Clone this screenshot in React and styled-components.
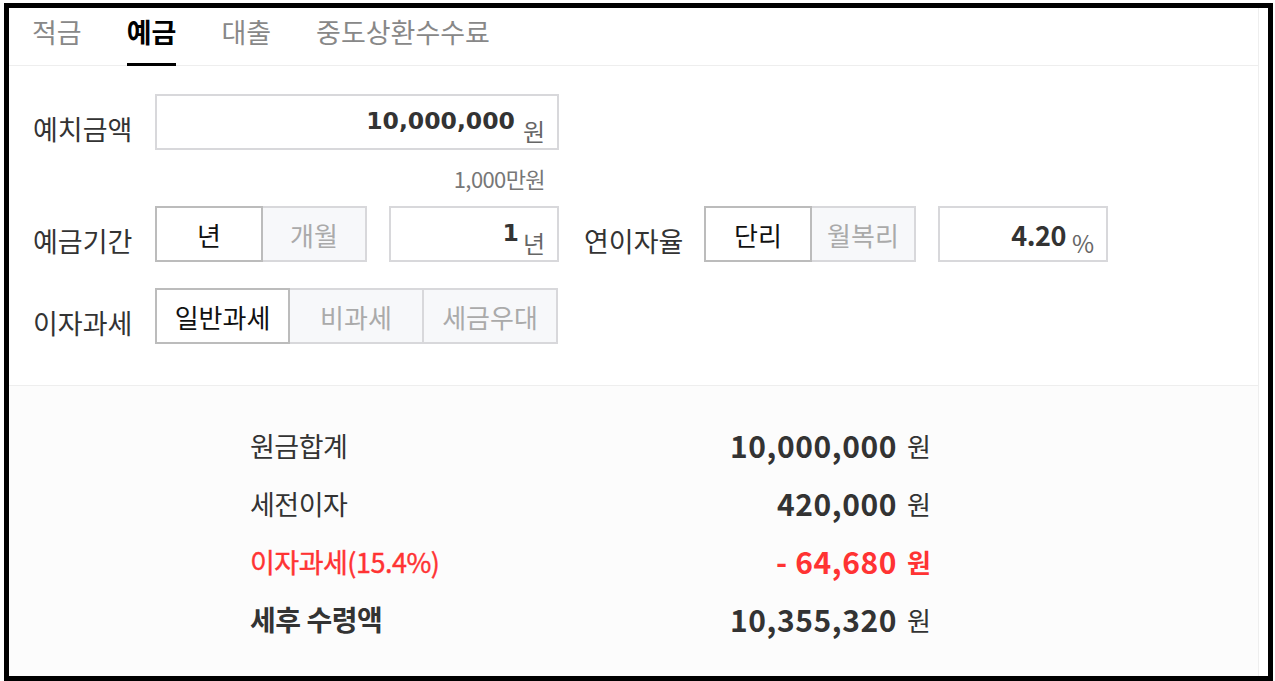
import React from "react";
import styled, { createGlobalStyle, css } from "styled-components";

const Global = createGlobalStyle`
  html, body { margin: 0; padding: 0; background: #fff; }
  body { font-family: "Noto Sans CJK KR", "Noto Sans", sans-serif; color: #333; }
  * { box-sizing: border-box; }
`;

const Frame = styled.div`
  margin: 3px 0 0 4px;
  width: 1269px;
  height: 678px;
  border: 5px solid #000;
  display: flex;
  overflow: hidden;
  background: #fff;
`;

const Panel = styled.div`
  width: 1250px;
  border-right: 1px solid #eeeeee;
  display: flex;
  flex-direction: column;
`;

const TabBar = styled.div`
  height: 58px;
  display: flex;
  gap: 45px;
  padding-left: 23px;
  border-bottom: 1px solid #eeeeee;
`;

const Tab = styled.div`
  height: 58px;
  margin-bottom: -1px;
  padding-bottom: 12px;
  display: flex;
  align-items: center;
  font-size: 27px;
  color: #888;
  ${(p) =>
    p.$active &&
    css`
      color: #000;
      font-weight: 700;
      border-bottom: 3px solid #000;
      padding-bottom: 9px;
    `}
`;

const Form = styled.div`
  padding: 28px 0 41px 24px;
  display: flex;
  flex-direction: column;
`;

const Row = styled.div`
  display: flex;
  align-items: stretch;
  height: 56px;
  margin-top: ${(p) => p.$mt || 0}px;
`;

const Label = styled.div`
  width: ${(p) => p.$w || 122}px;
  margin-left: ${(p) => p.$ml || 0}px;
  flex: none;
  font-size: 27px;
  color: #333;
  display: flex;
  align-items: center;
  padding-top: 12px;
`;

const Segmented = styled.div`
  display: flex;
  margin-right: 22px;
`;

const SegButton = styled.div`
  position: relative;
  width: ${(p) => p.$w}px;
  height: 56px;
  margin-left: -2px;
  &:first-child { margin-left: 0; }
  border: 2px solid #d8d8db;
  background: #f7f8fa;
  color: #aaa;
  font-size: 26px;
  display: flex;
  align-items: center;
  justify-content: center;
  ${(p) =>
    p.$active &&
    css`
      z-index: 1;
      border-color: #bcbcbc;
      background: #fff;
      color: #111;
    `}
`;

const InputBox = styled.div`
  width: ${(p) => p.$w}px;
  height: 56px;
  border: 2px solid #d8d8db;
  background: #fff;
  display: flex;
  justify-content: flex-end;
  align-items: center;
  padding-right: 12px;
  gap: ${(p) => p.$gap ?? 6}px;
`;

const InputNum = styled.span`
  font-family: ${(p) => (p.$narrow ? '"Noto Sans CJK KR", sans-serif' : '"DejaVu Sans", sans-serif')};
  font-weight: 700;
  font-size: ${(p) => (p.$narrow ? 27 : 23.5)}px;
  color: #333;
  line-height: 1;
  letter-spacing: ${(p) => (p.$narrow ? -0.5 : 0)}px;
`;

const InputUnit = styled.span`
  font-size: 24px;
  color: #666;
  line-height: 1;
  margin-top: 18px;
`;

const Helper = styled.div`
  width: 390px;
  height: 56px;
  display: flex;
  align-items: center;
  justify-content: flex-end;
  font-size: 22px;
  color: #777;
  letter-spacing: -0.6px;
`;

const Results = styled.div`
  flex: 1;
  background: #fcfcfc;
  border-top: 1px solid #eeeeee;
  padding: 30px 0 0 241px;
  display: flex;
  flex-direction: column;
`;

const ResultRow = styled.div`
  width: 681px;
  height: 58px;
  display: flex;
  align-items: center;
  justify-content: space-between;
  color: ${(p) => (p.$red ? "#ff3333" : "#333")};
`;

const ResultLabel = styled.div`
  font-size: ${(p) => (p.$bold ? 28 : 27)}px;
  font-weight: ${(p) => (p.$bold ? 700 : 400)};
  letter-spacing: -0.5px;
  ${(p) => p.$medium && css`-webkit-text-stroke: 0.4px #ff3333;`}
`;

const ResultValue = styled.div`
  display: flex;
  align-items: center;
  gap: 10px;
`;

const ResultNum = styled.span`
  font-size: 30px;
  font-weight: 700;
  letter-spacing: 0.6px;
`;

const ResultUnit = styled.span`
  font-size: 26px;
  font-weight: ${(p) => (p.$bold ? 700 : 400)};
`;

const results = [
  { label: "원금합계", value: "10,000,000" },
  { label: "세전이자", value: "420,000" },
  { label: "이자과세(15.4%)", value: "- 64,680", red: true },
  { label: "세후 수령액", value: "10,355,320", bold: true },
];

export default function App() {
  return (
    <>
      <Global />
      <Frame>
        <Panel>
          <TabBar>
            <Tab>적금</Tab>
            <Tab $active>예금</Tab>
            <Tab>대출</Tab>
            <Tab>중도상환수수료</Tab>
          </TabBar>
          <Form>
            <Row>
              <Label>예치금액</Label>
              <InputBox $w={404} $gap={8}>
                <InputNum>10,000,000</InputNum>
                <InputUnit>원</InputUnit>
              </InputBox>
            </Row>
            <Row>
              <Label />
              <Helper>1,000만원</Helper>
            </Row>
            <Row>
              <Label>예금기간</Label>
              <Segmented>
                <SegButton $w={108} $active>년</SegButton>
                <SegButton $w={106}>개월</SegButton>
              </Segmented>
              <InputBox $w={170} $gap={4}>
                <InputNum>1</InputNum>
                <InputUnit>년</InputUnit>
              </InputBox>
              <Label $w={120} $ml={25}>연이자율</Label>
              <Segmented>
                <SegButton $w={108} $active>단리</SegButton>
                <SegButton $w={106}>월복리</SegButton>
              </Segmented>
              <InputBox $w={170} $gap={6}>
                <InputNum $narrow>4.20</InputNum>
                <InputUnit>%</InputUnit>
              </InputBox>
            </Row>
            <Row $mt={26}>
              <Label>이자과세</Label>
              <Segmented>
                <SegButton $w={135} $active>일반과세</SegButton>
                <SegButton $w={136}>비과세</SegButton>
                <SegButton $w={136}>세금우대</SegButton>
              </Segmented>
            </Row>
          </Form>
          <Results>
            {results.map((r) => (
              <ResultRow key={r.label} $red={r.red}>
                <ResultLabel $bold={r.bold} $medium={r.red}>{r.label}</ResultLabel>
                <ResultValue>
                  <ResultNum>{r.value}</ResultNum>
                  <ResultUnit $bold={r.red}>원</ResultUnit>
                </ResultValue>
              </ResultRow>
            ))}
          </Results>
        </Panel>
      </Frame>
    </>
  );
}
